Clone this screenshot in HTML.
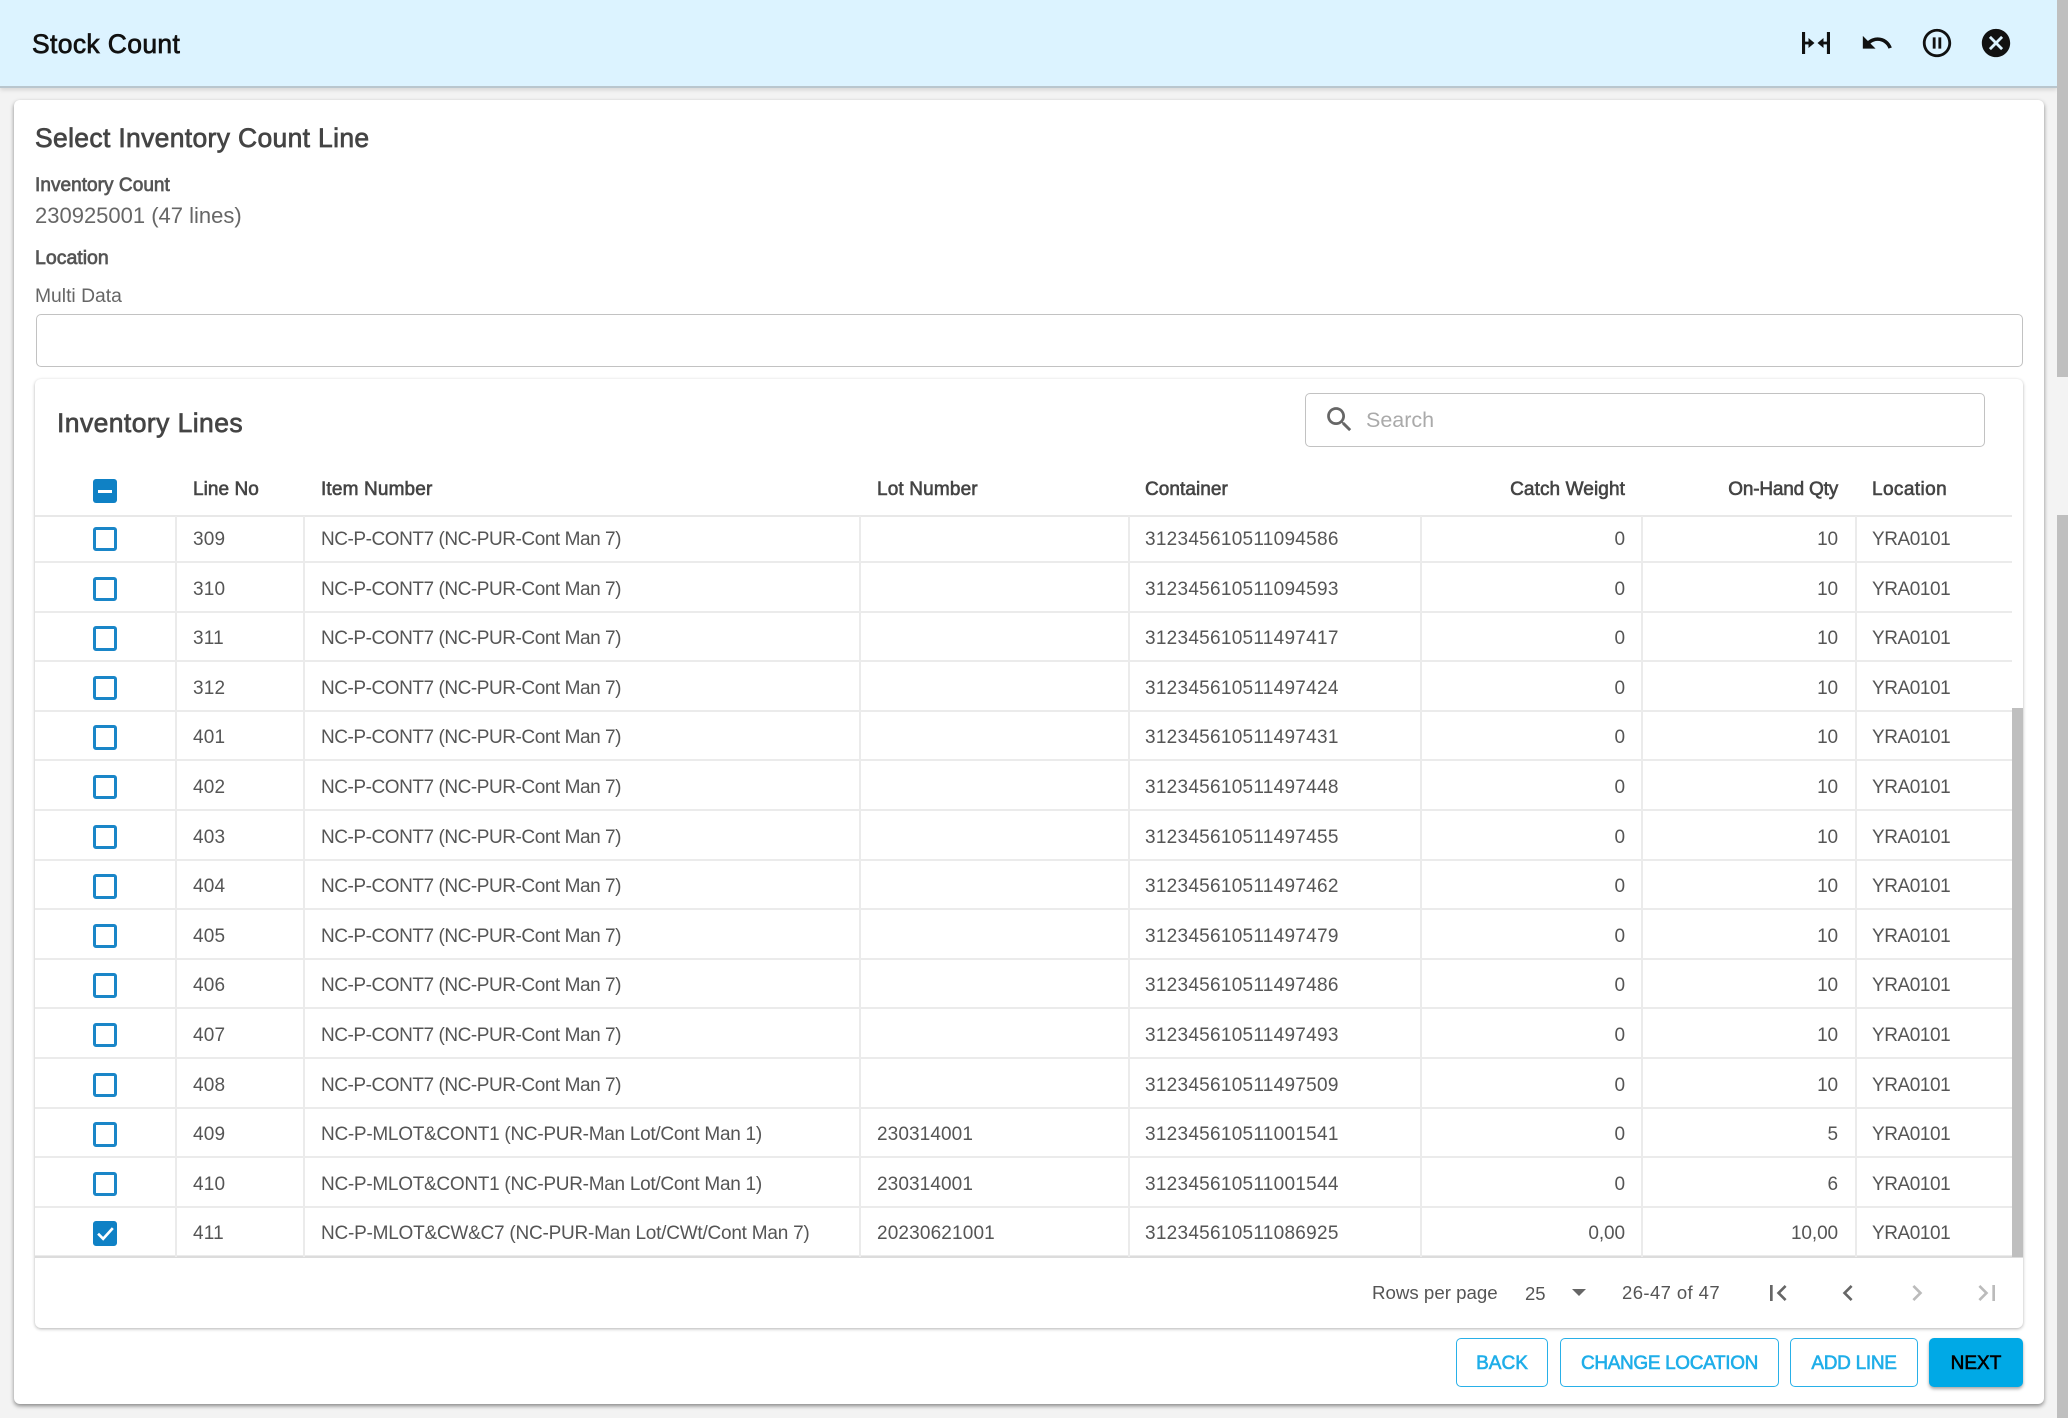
<!DOCTYPE html>
<html><head><meta charset="utf-8"><title>Stock Count</title>
<style>
html,body{margin:0;padding:0;width:2068px;height:1418px;overflow:hidden;background:#f3f3f3;font-family:"Liberation Sans",Arial,sans-serif;}
#w{position:absolute;left:0;top:0;width:2068px;height:1418px;filter:blur(.35px);}
.a{position:absolute;white-space:nowrap;}
.m{-webkit-text-stroke:.7px currentColor;}
#hd{position:absolute;left:0;top:0;width:2057px;height:86px;background:#dcf3ff;border-bottom:2px solid #b9c6ce;box-shadow:0 2px 4px rgba(0,0,0,.12);}
#card{position:absolute;left:14px;top:100px;width:2030px;height:1304px;background:#fff;border-radius:6px;box-shadow:0 2px 4px rgba(0,0,0,.45);}
#inner{position:absolute;left:35px;top:379px;width:1988px;height:949px;background:#fff;border-radius:6px;box-shadow:0 1px 3px rgba(0,0,0,.3);}
#inp{position:absolute;left:36px;top:314px;width:1985px;height:51px;border:1.5px solid #c2c2c2;border-radius:5px;background:#fff;}
#sb{position:absolute;left:1305px;top:393px;width:678px;height:52px;border:1.5px solid #c2c2c2;border-radius:5px;background:#fff;}
.t{position:absolute;top:2px;line-height:50px;height:50px;font-size:19px;color:#555;white-space:nowrap;letter-spacing:-.1px;}
.r{position:absolute;left:35px;width:1977px;height:49.6px;}
.r::after{content:"";position:absolute;left:0;right:0;top:48px;height:2px;background:#ebebeb;}
.cb{position:absolute;left:58px;top:14px;width:18.4px;height:18.4px;border:3px solid #1a86c8;border-radius:3px;background:#fff;}
.c1{left:158px;letter-spacing:.2px}.c2{left:286px;letter-spacing:-.45px}.c3{left:842px;letter-spacing:.1px}.c4{left:1110px;letter-spacing:.27px}.c5{right:387px}.c6{right:174px}.c7{left:1837px;letter-spacing:-.45px}
.v{position:absolute;top:516px;height:741px;width:2px;background:#ebebeb;}
.th{position:absolute;top:475px;line-height:30px;font-size:19px;letter-spacing:.05px;color:#444;white-space:nowrap;-webkit-text-stroke:.6px #444;}
.btn{position:absolute;top:1338px;height:47px;line-height:49px;text-align:center;border:1.5px solid #29b0e8;border-radius:5px;color:#1faee9;font-size:19px;-webkit-text-stroke:.6px currentColor;background:#fff;}
</style></head><body><div id="w">
<div id="hd"></div>
<div class="a m" style="left:32px;top:27px;line-height:34px;font-size:26.5px;letter-spacing:.35px;color:#111;">Stock Count</div>
<svg class="a" style="left:1802px;top:32px" width="28" height="22" viewBox="0 0 28 22"><path d="M1.500 0V22M26.500 0V22" stroke="#111" stroke-width="3.200" fill="none"/><path d="M2 11H8M20 11H26" stroke="#111" stroke-width="2.800" fill="none"/><path d="M6.500 6L12.500 11L6.500 16ZM21.500 6L15.500 11L21.500 16Z" fill="#111"/></svg>
<svg class="a" style="left:1860px;top:26px" width="34" height="34" viewBox="0 0 24 24"><path fill="#111" d="M12.5 8c-2.65 0-5.05.99-6.9 2.6L2 7v9h9l-3.62-3.62c1.39-1.16 3.16-1.88 5.12-1.88 3.54 0 6.55 2.31 7.6 5.5l2.37-.78C21.08 11.03 17.15 8 12.5 8z"/></svg>
<svg class="a" style="left:1920px;top:26px" width="34" height="34" viewBox="0 0 24 24"><path fill="#111" d="M9 16h2V8H9v8zm3-14C6.48 2 2 6.48 2 12s4.48 10 10 10 10-4.48 10-10S17.52 2 12 2zm0 18c-4.41 0-8-3.59-8-8s3.590-8 8-8 8 3.590 8 8-3.590 8-8 8zm1-4h2V8h-2v8z"/></svg>
<svg class="a" style="left:1979px;top:26px" width="34" height="34" viewBox="0 0 24 24"><path fill="#111" d="M12 2C6.470 2 2 6.470 2 12s4.470 10 10 10 10-4.470 10-10S17.530 2 12 2zm5 13.590L15.590 17 12 13.410 8.410 17 7 15.590 10.590 12 7 8.410 8.410 7 12 10.590 15.590 7 17 8.410 13.410 12 17 15.590z"/></svg>

<div class="a" style="left:2057px;top:0;width:11px;height:377px;background:#bfbfbf"></div>
<div class="a" style="left:2057px;top:515px;width:11px;height:903px;background:#bfbfbf"></div>

<div id="card"></div>
<div class="a m" style="left:35px;top:121px;line-height:34px;font-size:26.5px;letter-spacing:.33px;color:#444;">Select Inventory Count Line</div>
<div class="a m" style="left:35px;top:171px;line-height:30px;font-size:19px;letter-spacing:.05px;color:#555;">Inventory Count</div>
<div class="a" style="left:35px;top:201px;line-height:30px;font-size:22px;color:#666;">230925001 (47 lines)</div>
<div class="a m" style="left:35px;top:243px;line-height:30px;font-size:19.5px;color:#555;">Location</div>
<div class="a" style="left:35px;top:282px;line-height:30px;font-size:19.3px;color:#666;">Multi Data</div>
<div id="inp"></div>

<div id="inner"></div>
<div class="a m" style="left:57px;top:406px;line-height:34px;font-size:26.5px;letter-spacing:.42px;color:#444;">Inventory Lines</div>
<div id="sb"></div>
<svg class="a" style="left:1323px;top:403px" width="33" height="33" viewBox="0 0 24 24"><path fill="#666" d="M15.500 14h-.79l-.28-.27C15.410 12.590 16 11.110 16 9.500 16 5.910 13.090 3 9.500 3S3 5.910 3 9.500 5.910 16 9.500 16c1.610 0 3.090-.59 4.230-1.570l.27.28v.79l5 4.990L20.490 19l-4.990-5zm-6 0C7.010 14 5 11.990 5 9.500S7.010 5 9.500 5 14 7.010 14 9.500 11.990 14 9.500 14z"/></svg>
<div class="a" style="left:1366px;top:405px;line-height:30px;font-size:21.500px;color:#aaa;">Search</div>

<div class="a" style="left:93px;top:479px;width:24.400px;height:24.400px;background:#0f81c5;border-radius:3px"><div style="position:absolute;left:5px;top:10.500px;width:14px;height:3px;background:#fff"></div></div>
<div class="th" style="left:193px">Line No</div>
<div class="th" style="left:321px;letter-spacing:.15px">Item Number</div>
<div class="th" style="left:877px;letter-spacing:.15px">Lot Number</div>
<div class="th" style="left:1145px">Container</div>
<div class="th" style="right:443px;letter-spacing:.1px">Catch Weight</div>
<div class="th" style="right:230px;letter-spacing:-.2px">On-Hand Qty</div>
<div class="th" style="left:1872px;letter-spacing:.4px">Location</div>

<div class="r" style="top:513px"><div class="cb"></div><div class="t c1">309</div><div class="t c2">NC-P-CONT7 (NC-PUR-Cont Man 7)</div><div class="t c4">312345610511094586</div><div class="t c5">0</div><div class="t c6">10</div><div class="t c7">YRA0101</div></div>
<div class="r" style="top:562.6px"><div class="cb"></div><div class="t c1">310</div><div class="t c2">NC-P-CONT7 (NC-PUR-Cont Man 7)</div><div class="t c4">312345610511094593</div><div class="t c5">0</div><div class="t c6">10</div><div class="t c7">YRA0101</div></div>
<div class="r" style="top:612.2px"><div class="cb"></div><div class="t c1">311</div><div class="t c2">NC-P-CONT7 (NC-PUR-Cont Man 7)</div><div class="t c4">312345610511497417</div><div class="t c5">0</div><div class="t c6">10</div><div class="t c7">YRA0101</div></div>
<div class="r" style="top:661.8px"><div class="cb"></div><div class="t c1">312</div><div class="t c2">NC-P-CONT7 (NC-PUR-Cont Man 7)</div><div class="t c4">312345610511497424</div><div class="t c5">0</div><div class="t c6">10</div><div class="t c7">YRA0101</div></div>
<div class="r" style="top:711.4px"><div class="cb"></div><div class="t c1">401</div><div class="t c2">NC-P-CONT7 (NC-PUR-Cont Man 7)</div><div class="t c4">312345610511497431</div><div class="t c5">0</div><div class="t c6">10</div><div class="t c7">YRA0101</div></div>
<div class="r" style="top:761px"><div class="cb"></div><div class="t c1">402</div><div class="t c2">NC-P-CONT7 (NC-PUR-Cont Man 7)</div><div class="t c4">312345610511497448</div><div class="t c5">0</div><div class="t c6">10</div><div class="t c7">YRA0101</div></div>
<div class="r" style="top:810.6px"><div class="cb"></div><div class="t c1">403</div><div class="t c2">NC-P-CONT7 (NC-PUR-Cont Man 7)</div><div class="t c4">312345610511497455</div><div class="t c5">0</div><div class="t c6">10</div><div class="t c7">YRA0101</div></div>
<div class="r" style="top:860.2px"><div class="cb"></div><div class="t c1">404</div><div class="t c2">NC-P-CONT7 (NC-PUR-Cont Man 7)</div><div class="t c4">312345610511497462</div><div class="t c5">0</div><div class="t c6">10</div><div class="t c7">YRA0101</div></div>
<div class="r" style="top:909.8px"><div class="cb"></div><div class="t c1">405</div><div class="t c2">NC-P-CONT7 (NC-PUR-Cont Man 7)</div><div class="t c4">312345610511497479</div><div class="t c5">0</div><div class="t c6">10</div><div class="t c7">YRA0101</div></div>
<div class="r" style="top:959.4px"><div class="cb"></div><div class="t c1">406</div><div class="t c2">NC-P-CONT7 (NC-PUR-Cont Man 7)</div><div class="t c4">312345610511497486</div><div class="t c5">0</div><div class="t c6">10</div><div class="t c7">YRA0101</div></div>
<div class="r" style="top:1009px"><div class="cb"></div><div class="t c1">407</div><div class="t c2">NC-P-CONT7 (NC-PUR-Cont Man 7)</div><div class="t c4">312345610511497493</div><div class="t c5">0</div><div class="t c6">10</div><div class="t c7">YRA0101</div></div>
<div class="r" style="top:1058.6px"><div class="cb"></div><div class="t c1">408</div><div class="t c2">NC-P-CONT7 (NC-PUR-Cont Man 7)</div><div class="t c4">312345610511497509</div><div class="t c5">0</div><div class="t c6">10</div><div class="t c7">YRA0101</div></div>
<div class="r" style="top:1108.2px"><div class="cb"></div><div class="t c1">409</div><div class="t c2" style="letter-spacing:-.28px">NC-P-MLOT&amp;CONT1 (NC-PUR-Man Lot/Cont Man 1)</div><div class="t c3">230314001</div><div class="t c4">312345610511001541</div><div class="t c5">0</div><div class="t c6">5</div><div class="t c7">YRA0101</div></div>
<div class="r" style="top:1157.8px"><div class="cb"></div><div class="t c1">410</div><div class="t c2" style="letter-spacing:-.28px">NC-P-MLOT&amp;CONT1 (NC-PUR-Man Lot/Cont Man 1)</div><div class="t c3">230314001</div><div class="t c4">312345610511001544</div><div class="t c5">0</div><div class="t c6">6</div><div class="t c7">YRA0101</div></div>
<div class="r" style="top:1207.4px"><div class="cb" style="background:#0f81c5;border-color:#0f81c5"><svg style="position:absolute;left:-3px;top:-3px" width="24.400" height="24.400" viewBox="0 0 24 24"><path d="M5 12.500L10 17.500L19.500 7" stroke="#fff" stroke-width="2.600" fill="none"/></svg></div><div class="t c1">411</div><div class="t c2" style="letter-spacing:-.23px">NC-P-MLOT&amp;CW&amp;C7 (NC-PUR-Man Lot/CWt/Cont Man 7)</div><div class="t c3" style="letter-spacing:.15px">20230621001</div><div class="t c4">312345610511086925</div><div class="t c5">0,00</div><div class="t c6">10,00</div><div class="t c7">YRA0101</div></div>

<div class="a" style="left:35px;top:515px;width:1977px;height:2px;background:#e8e8e8"></div>
<div class="a" style="left:35px;top:1256px;width:1988px;height:2px;background:#dcdcdc"></div>
<div class="v" style="left:175px"></div><div class="v" style="left:303px"></div><div class="v" style="left:859px"></div><div class="v" style="left:1128px"></div><div class="v" style="left:1419.500px"></div><div class="v" style="left:1641px"></div><div class="v" style="left:1854.500px"></div>
<div class="a" style="left:2012px;top:708px;width:10.500px;height:549px;background:#bfbfbf"></div>

<div class="a" style="left:1372px;top:1278px;line-height:30px;font-size:18.700px;color:#555;">Rows per page</div>
<div class="a" style="left:1525px;top:1279px;line-height:30px;font-size:18.500px;color:#555;">25</div>
<svg class="a" style="left:1572px;top:1289px" width="14" height="7"><path d="M0 0H14L7 7Z" fill="#666"/></svg>
<div class="a" style="left:1622px;top:1278px;line-height:30px;font-size:18.500px;letter-spacing:.4px;color:#555;">26-47 of 47</div>
<svg class="a" style="left:1762px;top:1277px" width="32" height="32" viewBox="0 0 24 24"><path fill="#666" d="M18.410 16.590L13.820 12l4.590-4.590L17 6l-6 6 6 6zM6 6h2v12H6z"/></svg>
<svg class="a" style="left:1832px;top:1277px" width="32" height="32" viewBox="0 0 24 24"><path fill="#666" d="M15.410 7.410L14 6l-6 6 6 6 1.410-1.410L10.830 12z"/></svg>
<svg class="a" style="left:1901px;top:1277px" width="32" height="32" viewBox="0 0 24 24"><path fill="#bbb" d="M10 6L8.590 7.410 13.170 12l-4.580 4.590L10 18l6-6z"/></svg>
<svg class="a" style="left:1971px;top:1277px" width="32" height="32" viewBox="0 0 24 24"><path fill="#bbb" d="M5.590 7.410L10.180 12l-4.590 4.590L7 18l6-6-6-6zM16 6h2v12h-2z"/></svg>

<div class="btn" style="left:1456px;width:90px">BACK</div>
<div class="btn" style="left:1560px;width:217px;letter-spacing:-.35px">CHANGE LOCATION</div>
<div class="btn" style="left:1790px;width:126px;letter-spacing:-.3px">ADD LINE</div>
<div class="btn" style="left:1929px;width:94px;top:1338px;height:49px;line-height:51px;border:0;background:#00a9e6;color:#000;box-shadow:0 2px 3px rgba(0,0,0,.35)">NEXT</div>
</div></body></html>
